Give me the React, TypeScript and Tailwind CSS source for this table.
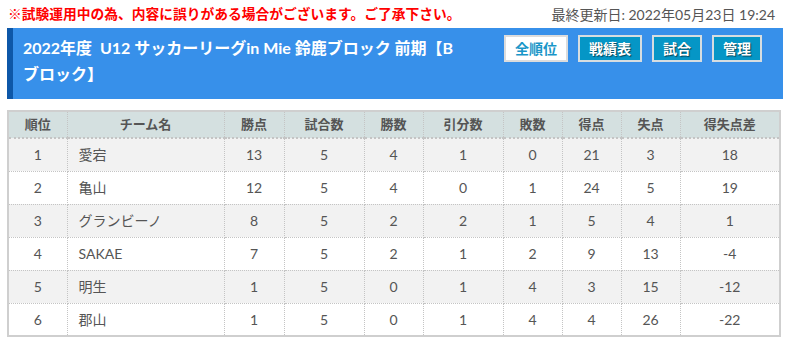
const cols = [
  { label: "順位", w: "w-[59px]" },
  { label: "チーム名", w: "w-[157px]" },
  { label: "勝点", w: "w-[60px]" },
  { label: "試合数", w: "w-[80px]" },
  { label: "勝数", w: "w-[59px]" },
  { label: "引分数", w: "w-[80px]" },
  { label: "敗数", w: "w-[59px]" },
  { label: "得点", w: "w-[59px]" },
  { label: "失点", w: "w-[59px]" },
  { label: "得失点差", w: "" },
];

const rows: (string | number)[][] = [
  [1, "愛宕", 13, 5, 4, 1, 0, 21, 3, 18],
  [2, "亀山", 12, 5, 4, 0, 1, 24, 5, 19],
  [3, "グランビーノ", 8, 5, 2, 2, 1, 5, 4, 1],
  [4, "SAKAE", 7, 5, 2, 1, 2, 9, 13, -4],
  [5, "明生", 1, 5, 0, 1, 4, 3, 15, -12],
  [6, "郡山", 1, 5, 0, 1, 4, 4, 26, -22],
];

function NavButton({ label, active }: { label: string; active?: boolean }) {
  return (
    <button
      className={
        active
          ? "h-[27px] border-2 border-[#dcdcdc] bg-white px-[9px] text-[14px] font-bold text-[#1a96c8]"
          : "h-[27px] border-2 border-[#d6dde0] bg-[#0596c6] px-[9px] text-[14px] font-bold text-white [text-shadow:1px_1px_1px_rgba(0,0,0,0.55)]"
      }
    >
      {label}
    </button>
  );
}

export default function App() {
  return (
    <div className="w-[790px] h-[340px] bg-white font-['Lato','Noto_Sans_CJK_JP',sans-serif] text-[#555]">
      <div className="flex h-[28px] items-center justify-between pl-[8px] pr-[15px]">
        <p className="text-[13.75px] font-bold text-[#f00]">
          ※試験運用中の為、内容に誤りがある場合がございます。ご了承下さい。
        </p>
        <p className="text-[14px] text-[#555]">最終更新日: 2022年05月23日 19:24</p>
      </div>

      <div className="mx-[7px] flex h-[71px] border-l-[6px] border-[#0d57a8] bg-[#3790ea] pl-[10px] pr-[21px] pt-[7px]">
        <h1 className="text-[16px] font-bold leading-[26px] text-white">
          2022年度&nbsp; U12 サッカーリーグin Mie 鈴鹿ブロック 前期【B
          <br />
          ブロック】
        </h1>
        <div className="ml-auto flex gap-[10px]">
          <NavButton label="全順位" active />
          <NavButton label="戦績表" />
          <NavButton label="試合" />
          <NavButton label="管理" />
        </div>
      </div>

      <div className="mx-[7px] mt-[11px]">
        <table className="w-[774px] table-fixed border-collapse border-2 border-[#cfcfcf]">
          <thead>
            <tr className="h-[27px] bg-[#d4e0e0]">
              {cols.map((c) => (
                <th
                  key={c.label}
                  className={`${c.w} border-x border-dotted border-[#c4c4c4] border-b-2 border-b-solid text-center text-[13px] font-bold text-[#555]`}
                >
                  {c.label}
                </th>
              ))}
            </tr>
          </thead>
          <tbody>
            {rows.map((r, i) => (
              <tr key={i} className={i % 2 === 0 ? "h-[33px] bg-[#f2f2f2]" : "h-[33px] bg-white"}>
                {r.map((v, j) => (
                  <td
                    key={j}
                    className={
                      j === 1
                        ? "border border-dotted border-[#c4c4c4] pl-[11px] text-left text-[14px]"
                        : "border border-dotted border-[#c4c4c4] text-center text-[14px]"
                    }
                  >
                    {v}
                  </td>
                ))}
              </tr>
            ))}
          </tbody>
        </table>
      </div>
    </div>
  );
}
